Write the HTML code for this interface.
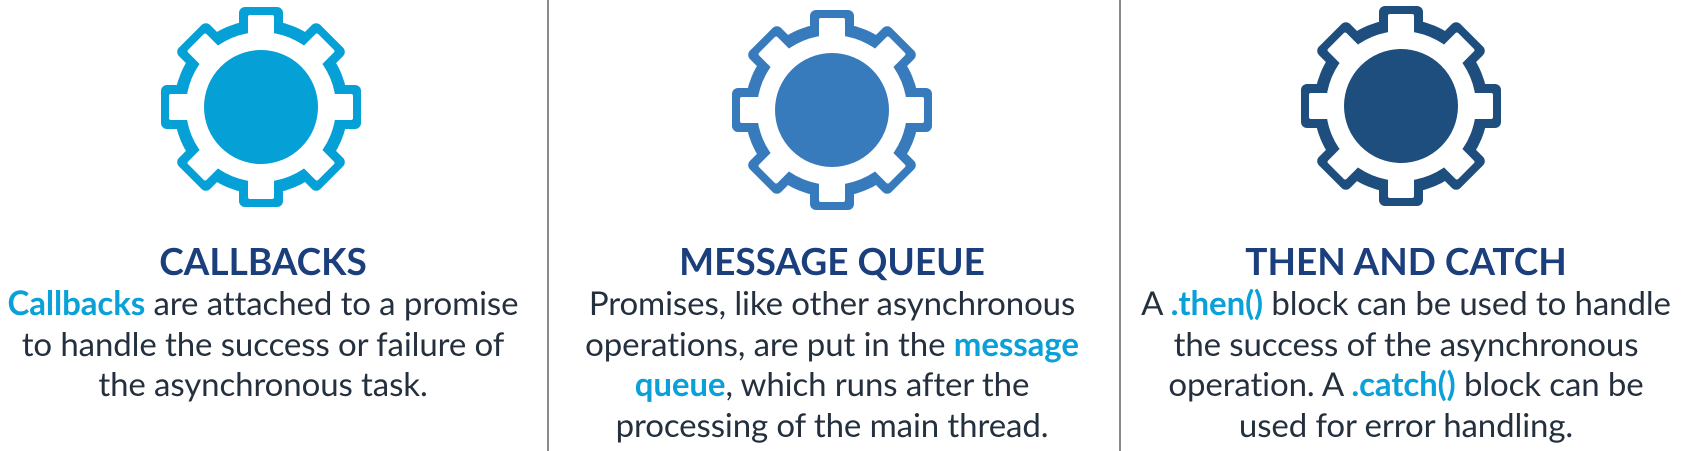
<!DOCTYPE html>
<html><head><meta charset="utf-8"><style>
html,body{margin:0;padding:0;background:#fff;}
body{width:1682px;height:451px;position:relative;overflow:hidden;font-family:"Lato","Liberation Sans",sans-serif;}
.div{position:absolute;top:0;width:2px;height:451px;background:#8a8a8a;}
.g{position:absolute;top:0;}
.col{position:absolute;width:640px;text-align:center;}
.t{position:absolute;left:0;width:100%;top:241px;font-size:37px;line-height:40px;font-weight:bold;color:#1b3f7c;}
.b{position:absolute;left:0;width:100%;top:283px;font-size:33px;line-height:40.5px;color:#25303f;letter-spacing:-0.1px;}
.h{color:#0aa0d8;font-weight:bold;}
</style></head><body>
<div class="div" style="left:547px"></div>
<div class="div" style="left:1119px"></div>

<svg width="0" height="0" style="position:absolute">
<defs>
<g id="gear">
<circle r="87" fill="currentColor"/>
<g fill="currentColor">
<rect x="-22" y="-100" width="44" height="30" rx="6" transform="rotate(0)"/>
<rect x="-22" y="-100" width="44" height="30" rx="6" transform="rotate(45)"/>
<rect x="-22" y="-100" width="44" height="30" rx="6" transform="rotate(90)"/>
<rect x="-22" y="-100" width="44" height="30" rx="6" transform="rotate(135)"/>
<rect x="-22" y="-100" width="44" height="30" rx="6" transform="rotate(180)"/>
<rect x="-22" y="-100" width="44" height="30" rx="6" transform="rotate(225)"/>
<rect x="-22" y="-100" width="44" height="30" rx="6" transform="rotate(270)"/>
<rect x="-22" y="-100" width="44" height="30" rx="6" transform="rotate(315)"/>
</g>
<circle r="75" fill="#fff"/>
<g fill="#fff">
<rect x="-13" y="-92" width="26" height="24" rx="2" transform="rotate(0)"/>
<rect x="-13" y="-92" width="26" height="24" rx="2" transform="rotate(45)"/>
<rect x="-13" y="-92" width="26" height="24" rx="2" transform="rotate(90)"/>
<rect x="-13" y="-92" width="26" height="24" rx="2" transform="rotate(135)"/>
<rect x="-13" y="-92" width="26" height="24" rx="2" transform="rotate(180)"/>
<rect x="-13" y="-92" width="26" height="24" rx="2" transform="rotate(225)"/>
<rect x="-13" y="-92" width="26" height="24" rx="2" transform="rotate(270)"/>
<rect x="-13" y="-92" width="26" height="24" rx="2" transform="rotate(315)"/>
</g>
<circle r="57" fill="currentColor"/>
</g>
</defs>
</svg>

<svg class="g" style="left:0;color:#04a0d6" width="1682" height="220">
<use href="#gear" transform="translate(261,107)"/>
<use href="#gear" transform="translate(832,110)" style="color:#387bbd"/>
<use href="#gear" transform="translate(1401,106)" style="color:#1e4e7e"/>
</svg>

<div class="col" style="left:-57px">
<div class="t">CALLBACKS</div>
<div class="b"><span class="h">Callbacks</span> are attached to a promise<br>to handle the success or failure of<br>the asynchronous task.</div>
</div>

<div class="col" style="left:512px">
<div class="t">MESSAGE QUEUE</div>
<div class="b">Promises, like other asynchronous<br>operations, are put in the <span class="h">message</span><br><span class="h">queue</span>, which runs after the<br>processing of the main thread.</div>
</div>

<div class="col" style="left:1086px">
<div class="t">THEN AND CATCH</div>
<div class="b">A <span class="h">.then()</span> block can be used to handle<br>the success of the asynchronous<br>operation. A <span class="h">.catch()</span> block can be<br>used for error handling.</div>
</div>
</body></html>
